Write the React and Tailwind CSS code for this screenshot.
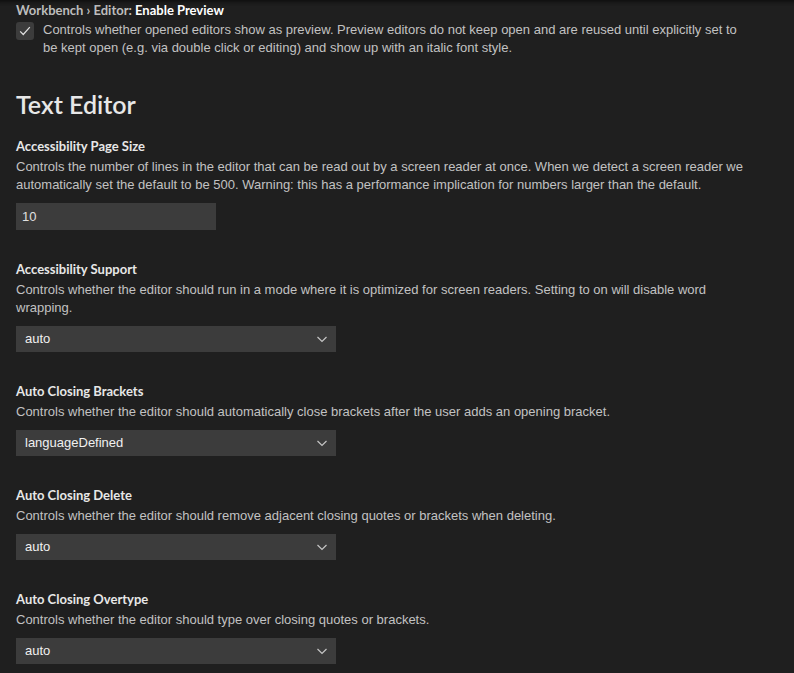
import React from 'react'

const font = { fontFamily: '"Liberation Sans", Arial, sans-serif' }
const strong = { fontFamily: 'Lato, "Liberation Sans", sans-serif' }

function Chevron() {
  return (
    <svg width="16" height="16" viewBox="0 0 16 16" className="text-[#c5c5c5]">
      <path d="M3.5 6 L8 10.5 L12.5 6" fill="none" stroke="currentColor" strokeWidth="1.2" />
    </svg>
  )
}

function Setting({ title, lines, children }) {
  return (
    <div>
      <div className="text-[13px] leading-[18px] font-bold text-[#e7e7e7]" style={strong}>{title}</div>
      <div className="mt-[3px] text-[13px] leading-[18px] text-[#c2c2c2]">
        {lines.map((l, i) => (
          <div key={i} className="whitespace-nowrap">{l}</div>
        ))}
      </div>
      <div className="mt-[9px]">{children}</div>
    </div>
  )
}

function Select({ value }) {
  return (
    <div className="w-[320px] h-[26px] bg-[#3c3c3c] flex items-center justify-between pl-[9px] pr-[6px] text-[13px] text-[#f0f0f0]">
      <span>{value}</span>
      <Chevron />
    </div>
  )
}

export default function App() {
  return (
    <div className="relative h-[673px] overflow-hidden bg-[#1f1f1f] pt-px" style={font}>
      {/* scroll shadow */}
      <div className="absolute inset-x-0 top-0 h-[6px] shadow-[inset_0_6px_6px_-6px_#000] pointer-events-none" />

      <div className="px-4">
        <div className="h-[18px] text-[13px] leading-[18px] font-bold text-[#bdbdbd]" style={strong}>
          Workbench › Editor: <span className="text-[#ffffff]">Enable Preview</span>
        </div>
        <div className="flex gap-[9px] mt-[2px]">
          <div className="w-[18px] h-[18px] mt-[1px] shrink-0 rounded-[3px] bg-[#3c3c3c] flex items-center justify-center">
            <svg width="14" height="14" viewBox="0 0 16 16">
              <path d="M2.5 8.5 L6 12 L13.5 3.5" fill="none" stroke="#e0e0e0" strokeWidth="1.4" />
            </svg>
          </div>
          <div className="text-[13px] leading-[18px] text-[#c2c2c2]">
            <div className="whitespace-nowrap">Controls whether opened editors show as preview. Preview editors do not keep open and are reused until explicitly set to</div>
            <div className="whitespace-nowrap">be kept open (e.g. via double click or editing) and show up with an italic font style.</div>
          </div>
        </div>

        <div className="mt-[31px] text-[25px] leading-[32px] font-semibold text-[#e7e7e7]" style={strong}>Text Editor</div>

        <div className="mt-[17px] flex flex-col gap-[30px]">
          <Setting
            title="Accessibility Page Size"
            lines={[
              'Controls the number of lines in the editor that can be read out by a screen reader at once. When we detect a screen reader we',
              'automatically set the default to be 500. Warning: this has a performance implication for numbers larger than the default.',
            ]}
          >
            <div className="w-[200px] h-[27px] bg-[#3c3c3c] flex items-center pl-[6px] text-[13px] text-[#e0e0e0]">10</div>
          </Setting>
          <Setting
            title="Accessibility Support"
            lines={[
              'Controls whether the editor should run in a mode where it is optimized for screen readers. Setting to on will disable word',
              'wrapping.',
            ]}
          >
            <Select value="auto" />
          </Setting>
          <Setting
            title="Auto Closing Brackets"
            lines={['Controls whether the editor should automatically close brackets after the user adds an opening bracket.']}
          >
            <Select value="languageDefined" />
          </Setting>
          <Setting
            title="Auto Closing Delete"
            lines={['Controls whether the editor should remove adjacent closing quotes or brackets when deleting.']}
          >
            <Select value="auto" />
          </Setting>
          <Setting
            title="Auto Closing Overtype"
            lines={['Controls whether the editor should type over closing quotes or brackets.']}
          >
            <Select value="auto" />
          </Setting>
        </div>
      </div>
    </div>
  )
}
